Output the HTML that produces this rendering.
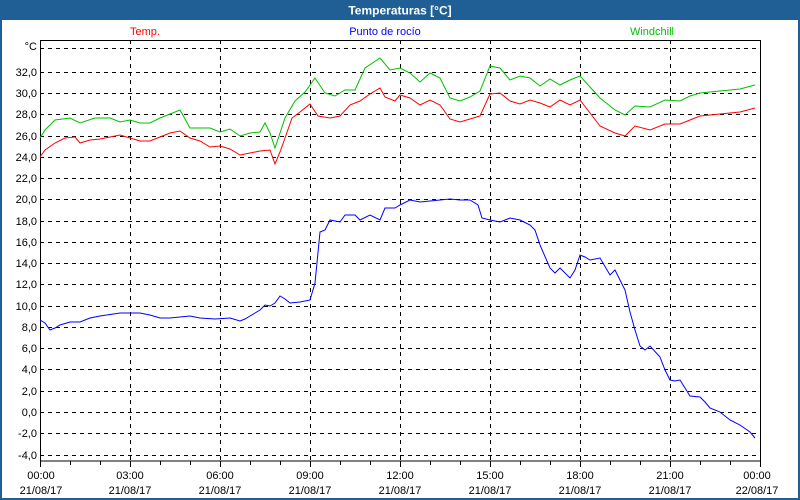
<!DOCTYPE html>
<html><head><meta charset="utf-8"><style>
body{margin:0;width:800px;height:500px;overflow:hidden;background:#1f5f96}
svg{position:absolute;left:0;top:0}
</style></head><body>
<svg width="800" height="500" viewBox="0 0 800 500" font-family="'Liberation Sans',sans-serif" font-size="11">
<rect x="0" y="0" width="800" height="500" fill="#1f5f96"/>
<rect x="2" y="20" width="796" height="478" fill="#fff"/>
<text x="400" y="14.5" fill="#fff" font-weight="bold" font-size="12" text-anchor="middle">Temperaturas [°C]</text>
<text x="145" y="35" fill="#ff0000" text-anchor="middle">Temp.</text>
<text x="385" y="35" fill="#0000ff" text-anchor="middle">Punto de rocío</text>
<text x="652" y="35" fill="#00c000" text-anchor="middle">Windchill</text>
<g stroke="#000" stroke-dasharray="4,4" stroke-width="1">
<line x1="40" x2="760" y1="48.5" y2="48.5"/>
<line x1="40" x2="760" y1="72.5" y2="72.5"/><line x1="40" x2="760" y1="93.5" y2="93.5"/><line x1="40" x2="760" y1="114.5" y2="114.5"/><line x1="40" x2="760" y1="136.5" y2="136.5"/><line x1="40" x2="760" y1="157.5" y2="157.5"/><line x1="40" x2="760" y1="178.5" y2="178.5"/><line x1="40" x2="760" y1="199.5" y2="199.5"/><line x1="40" x2="760" y1="221.5" y2="221.5"/><line x1="40" x2="760" y1="242.5" y2="242.5"/><line x1="40" x2="760" y1="263.5" y2="263.5"/><line x1="40" x2="760" y1="284.5" y2="284.5"/><line x1="40" x2="760" y1="306.5" y2="306.5"/><line x1="40" x2="760" y1="327.5" y2="327.5"/><line x1="40" x2="760" y1="348.5" y2="348.5"/><line x1="40" x2="760" y1="369.5" y2="369.5"/><line x1="40" x2="760" y1="391.5" y2="391.5"/><line x1="40" x2="760" y1="412.5" y2="412.5"/><line x1="40" x2="760" y1="433.5" y2="433.5"/><line x1="40" x2="760" y1="455.5" y2="455.5"/>
<line x1="130.5" x2="130.5" y1="40" y2="461"/><line x1="220.5" x2="220.5" y1="40" y2="461"/><line x1="310.5" x2="310.5" y1="40" y2="461"/><line x1="400.5" x2="400.5" y1="40" y2="461"/><line x1="490.5" x2="490.5" y1="40" y2="461"/><line x1="580.5" x2="580.5" y1="40" y2="461"/><line x1="670.5" x2="670.5" y1="40" y2="461"/>
</g>
<rect x="40.5" y="40.5" width="720" height="420.5" fill="none" stroke="#000"/>
<g stroke="#000"><line x1="70.5" x2="70.5" y1="461" y2="465"/><line x1="100.5" x2="100.5" y1="461" y2="465"/><line x1="160.5" x2="160.5" y1="461" y2="465"/><line x1="190.5" x2="190.5" y1="461" y2="465"/><line x1="250.5" x2="250.5" y1="461" y2="465"/><line x1="280.5" x2="280.5" y1="461" y2="465"/><line x1="340.5" x2="340.5" y1="461" y2="465"/><line x1="370.5" x2="370.5" y1="461" y2="465"/><line x1="430.5" x2="430.5" y1="461" y2="465"/><line x1="460.5" x2="460.5" y1="461" y2="465"/><line x1="520.5" x2="520.5" y1="461" y2="465"/><line x1="550.5" x2="550.5" y1="461" y2="465"/><line x1="610.5" x2="610.5" y1="461" y2="465"/><line x1="640.5" x2="640.5" y1="461" y2="465"/><line x1="700.5" x2="700.5" y1="461" y2="465"/><line x1="730.5" x2="730.5" y1="461" y2="465"/>
<line x1="40.5" x2="40.5" y1="461" y2="467"/><line x1="130.5" x2="130.5" y1="461" y2="467"/><line x1="220.5" x2="220.5" y1="461" y2="467"/><line x1="310.5" x2="310.5" y1="461" y2="467"/><line x1="400.5" x2="400.5" y1="461" y2="467"/><line x1="490.5" x2="490.5" y1="461" y2="467"/><line x1="580.5" x2="580.5" y1="461" y2="467"/><line x1="670.5" x2="670.5" y1="461" y2="467"/><line x1="760.5" x2="760.5" y1="461" y2="467"/></g>
<g fill="#000" text-anchor="end">
<text x="37" y="50">°C</text>
<text x="37" y="76">32,0</text><text x="37" y="97">30,0</text><text x="37" y="118">28,0</text><text x="37" y="140">26,0</text><text x="37" y="161">24,0</text><text x="37" y="182">22,0</text><text x="37" y="203">20,0</text><text x="37" y="225">18,0</text><text x="37" y="246">16,0</text><text x="37" y="267">14,0</text><text x="37" y="288">12,0</text><text x="37" y="310">10,0</text><text x="37" y="331">8,0</text><text x="37" y="352">6,0</text><text x="37" y="373">4,0</text><text x="37" y="395">2,0</text><text x="37" y="416">0,0</text><text x="37" y="437">-2,0</text><text x="37" y="459">-4,0</text>
</g>
<g fill="#000" text-anchor="middle">
<text x="41" y="479">00:00</text><text x="41" y="494">21/08/17</text>
<text x="130" y="479">03:00</text><text x="130" y="494">21/08/17</text>
<text x="220" y="479">06:00</text><text x="220" y="494">21/08/17</text>
<text x="310" y="479">09:00</text><text x="310" y="494">21/08/17</text>
<text x="400" y="479">12:00</text><text x="400" y="494">21/08/17</text>
<text x="490" y="479">15:00</text><text x="490" y="494">21/08/17</text>
<text x="580" y="479">18:00</text><text x="580" y="494">21/08/17</text>
<text x="670" y="479">21:00</text><text x="670" y="494">21/08/17</text>
<text x="757" y="479">00:00</text><text x="757" y="494">22/08/17</text>
</g>
<polyline fill="none" stroke="#00c000" points="40,138 45,130 55,120 70,118 80,123 95,118 110,118 120,122 130,120 140,123 150,123 160,118 170,114 180,110 190,128 200,128 210,128 220,132 230,129 240,136 250,133 260,132 265,123 270,133 275,148 285,118 295,101 305,92 315,78 325,93 335,96 345,90 355,90 365,68 380,58 390,70 400,68 410,73 420,82 430,73 440,78 450,98 460,101 470,97 480,91 490,66 500,68 510,80 520,76 530,78 540,86 550,79 560,85 570,80 580,76 590,87 600,98 615,110 625,115 635,106 650,107 665,100 680,101 690,96 700,93 720,91 740,89 755,85"/>
<polyline fill="none" stroke="#ff0000" points="40,157 45,150 55,143 65,138 75,137 80,143 90,140 100,139 110,137 120,135 130,138 140,141 150,141 160,137 170,133 180,131 190,138 200,141 210,147 220,146 230,149 240,155 250,153 260,151 270,150 275,164 280,152 285,138 292,118 300,112 310,104 318,116 330,118 340,116 350,105 360,101 370,94 380,88 385,97 395,101 400,95 410,98 420,105 430,100 440,105 450,119 460,122 470,119 480,116 490,94 500,93 510,101 520,104 530,100 540,103 550,107 560,100 570,105 580,100 590,113 600,126 615,133 625,136 635,126 650,130 665,124 680,124 690,120 700,116 720,114 740,112 755,108"/>
<polyline fill="none" stroke="#0000ff" points="40,320 45,323 50,330 55,328 60,325 70,322 80,322 90,318 100,316 120,313 140,313 150,315 160,318 170,318 190,316 200,318 215,319 230,318 240,321 245,319 250,316 255,313 260,310 265,305 270,306 275,303 280,296 285,299 290,303 300,302 310,300 315,283 320,232 325,230 330,220 340,222 345,215 355,215 360,220 370,215 380,220 385,208 395,208 400,205 410,200 420,202 430,201 440,200 450,199 460,200 470,200 478,205 482,218 490,220 500,222 510,218 520,220 530,225 535,230 540,245 550,268 555,273 560,268 570,278 575,270 580,255 585,257 590,260 600,258 610,275 615,270 625,290 630,312 635,330 640,346 645,350 650,346 660,357 665,370 670,380 675,381 680,380 685,388 690,396 700,397 705,402 710,408 720,412 730,420 740,425 750,432 755,438"/>
</svg>
</body></html>
